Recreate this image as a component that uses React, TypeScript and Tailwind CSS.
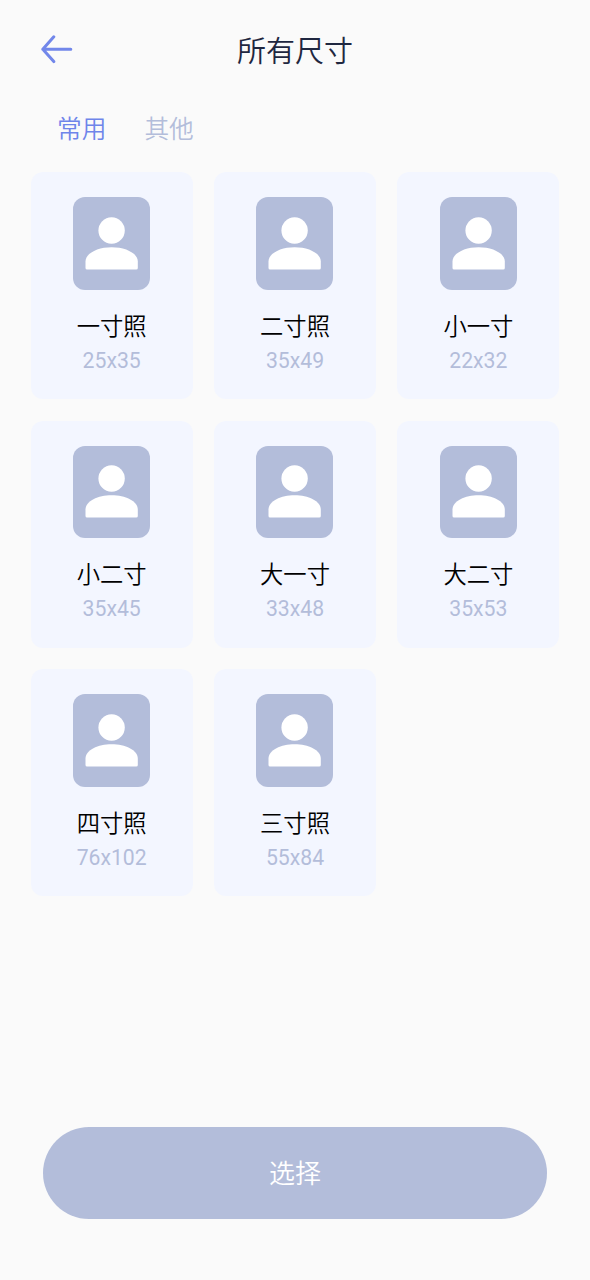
import React, { useState } from 'react';

interface PhotoSize {
    name: string;
    size: string;
}

const sizes: PhotoSize[] = [
    { name: '一寸照', size: '25x35' },
    { name: '二寸照', size: '35x49' },
    { name: '小一寸', size: '22x32' },
    { name: '小二寸', size: '35x45' },
    { name: '大一寸', size: '33x48' },
    { name: '大二寸', size: '35x53' },
    { name: '四寸照', size: '76x102' },
    { name: '三寸照', size: '55x84' },
];

const tabs = ['常用', '其他'];

const BackIcon: React.FC = () => (
    <svg width="34" height="30" viewBox="0 0 34 30" fill="none" stroke="#7287ea" strokeWidth="3" strokeLinecap="round" strokeLinejoin="round">
        <path d="M13.8 1.8 L2.8 14.2 L13.8 26.6 M2.8 14.2 H30.8" />
    </svg>
);

const PersonIcon: React.FC = () => (
    <svg width="53" height="53" viewBox="0 0 53 53" fill="#fff">
        <circle cx="26.6" cy="13.5" r="13.2" />
        <path d="M0.5 44.5 C0.5 36 13 30.2 26.6 30.2 C40.3 30.2 52.8 36 52.8 44.5 V51 Q52.8 52.6 51.2 52.6 H2.1 Q0.5 52.6 0.5 51 Z" />
    </svg>
);

const SizeCard: React.FC<PhotoSize> = ({ name, size }) => (
    <div className="flex h-[227.3px] flex-col items-center rounded-xl bg-[#f3f6ff] pt-[25px]">
        <div className="flex h-[92.5px] w-[77px] shrink-0 items-center justify-center rounded-xl bg-[#b3bdda]">
            <PersonIcon />
        </div>
        <p className="mt-[21px] text-[23.3px] font-[350] leading-[32px] text-black">{name}</p>
        <p className="mt-[3.4px] text-[21.2px] leading-[30px] text-[#b3bdda]">{size}</p>
    </div>
);

const App: React.FC = () => {
    const [activeTab, setActiveTab] = useState(tabs[0]);

    return (
        <div className="flex h-[1280px] w-[590px] flex-col bg-[#fafafa] font-[Roboto,'Noto_Sans_CJK_SC',sans-serif]">
            <header className="grid h-[100px] shrink-0 grid-cols-[1fr_auto_1fr] items-center px-[40px]">
                <button type="button" aria-label="返回">
                    <BackIcon />
                </button>
                <h1 className="pt-[4px] text-[29px] font-[350] leading-[40px] text-[#1f2740]">所有尺寸</h1>
            </header>
            <nav className="flex h-[72px] shrink-0 gap-[38px] pt-[12px] pl-[57px]">
                {tabs.map((tab) => (
                    <button
                        key={tab}
                        type="button"
                        onClick={() => setActiveTab(tab)}
                        className={`h-[36px] text-[24.7px] font-[350] leading-[36px] ${tab === activeTab ? 'text-[#6f85ea]' : 'text-[#b3bdda]'}`}
                    >
                        {tab}
                    </button>
                ))}
            </nav>
            <main className="grid grid-cols-3 gap-x-[21px] gap-y-[21.3px] px-[30.5px]">
                {sizes.map((item) => (
                    <SizeCard key={item.name} {...item} />
                ))}
            </main>
            <footer className="mt-auto px-[43px] pb-[61.5px]">
                <button type="button" className="h-[92px] w-full rounded-full bg-[#b3bdda] pt-[4px] text-[26px] font-[350] text-white">
                    选择
                </button>
            </footer>
        </div>
    );
};

export default App;
